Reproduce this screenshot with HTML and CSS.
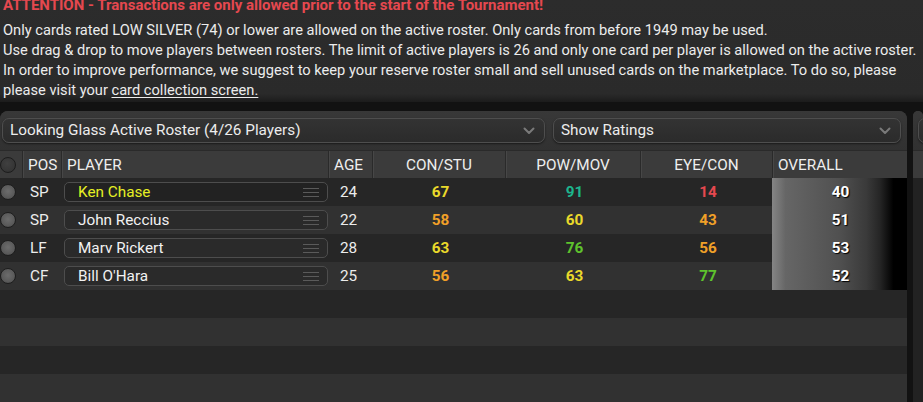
FILE: index.html
```html
<!DOCTYPE html>
<html>
<head>
<meta charset="utf-8">
<link rel="stylesheet" href="styles.css">
</head>
<body>
<div class="notice">
  <div class="attention">ATTENTION - Transactions are only allowed prior to the start of the Tournament!</div>
  <div class="line">Only cards rated LOW SILVER (74) or lower are allowed on the active roster. Only cards from before 1949 may be used.</div>
  <div class="line">Use drag &amp; drop to move players between rosters. The limit of active players is 26 and only one card per player is allowed on the active roster.</div>
  <div class="line">In order to improve performance, we suggest to keep your reserve roster small and sell unused cards on the marketplace. To do so, please</div>
  <div class="line">please visit your <span class="link">card collection screen.</span></div>
</div>
<div class="workspace">
  <section class="panel main">
    <div class="toolbar">
      <div class="select roster">Looking Glass Active Roster (4/26 Players)
        <svg class="chev" width="12" height="8" viewBox="0 0 12 8"><path d="M1.5 1.5 L6 6 L10.5 1.5" fill="none" stroke="#7a7a7a" stroke-width="2" stroke-linecap="round" stroke-linejoin="round"/></svg>
      </div>
      <div class="select ratings">Show Ratings
        <svg class="chev" width="12" height="8" viewBox="0 0 12 8"><path d="M1.5 1.5 L6 6 L10.5 1.5" fill="none" stroke="#7a7a7a" stroke-width="2" stroke-linecap="round" stroke-linejoin="round"/></svg>
      </div>
    </div>
    <div class="grid">
      <div class="hcell"><span class="dot head"></span></div>
      <div class="hcell left">POS</div>
      <div class="hcell left">PLAYER</div>
      <div class="hcell left">AGE</div>
      <div class="hcell">CON/STU</div>
      <div class="hcell">POW/MOV</div>
      <div class="hcell">EYE/CON</div>
      <div class="hcell left">OVERALL</div>

      <div class="row odd">
        <div class="cell"><span class="dot"></span></div>
        <div class="cell pos">SP</div>
        <div class="cell"><div class="name sel">Ken Chase<span class="handle"><i></i><i></i><i></i></span></div></div>
        <div class="cell age">24</div>
        <div class="cell num yellow">67</div>
        <div class="cell num teal">91</div>
        <div class="cell num red">14</div>
        <div class="cell overall">40</div>
      </div>
      <div class="row even">
        <div class="cell"><span class="dot"></span></div>
        <div class="cell pos">SP</div>
        <div class="cell"><div class="name">John Reccius<span class="handle"><i></i><i></i><i></i></span></div></div>
        <div class="cell age">22</div>
        <div class="cell num orange">58</div>
        <div class="cell num yellow">60</div>
        <div class="cell num orange">43</div>
        <div class="cell overall">51</div>
      </div>
      <div class="row odd">
        <div class="cell"><span class="dot"></span></div>
        <div class="cell pos">LF</div>
        <div class="cell"><div class="name">Marv Rickert<span class="handle"><i></i><i></i><i></i></span></div></div>
        <div class="cell age">28</div>
        <div class="cell num yellow">63</div>
        <div class="cell num green">76</div>
        <div class="cell num orange">56</div>
        <div class="cell overall">53</div>
      </div>
      <div class="row even">
        <div class="cell"><span class="dot"></span></div>
        <div class="cell pos">CF</div>
        <div class="cell"><div class="name">Bill O'Hara<span class="handle"><i></i><i></i><i></i></span></div></div>
        <div class="cell age">25</div>
        <div class="cell num orange">56</div>
        <div class="cell num yellow">63</div>
        <div class="cell num green">77</div>
        <div class="cell overall">52</div>
      </div>
      <div class="row blank odd"></div>
      <div class="row blank even"></div>
      <div class="row blank odd"></div>
      <div class="row blank even"></div>
    </div>
  </section>
  <section class="panel side">
    <div class="toolbar"><div class="select stub"></div></div>
    <div class="side-head"></div>
    <div class="side-rows"></div>
  </section>
</div>
</body>
</html>
```
FILE: styles.css
```css
* { box-sizing: border-box; }
html, body { margin: 0; padding: 0; }
body {
  width: 923px;
  height: 402px;
  overflow: hidden;
  background: #121212;
  font-family: Roboto, "Noto Sans", sans-serif;
  font-size: 15.3px;
  color: #ececec;
}
.notice {
  height: 102px;
  padding-left: 3px;
  background: linear-gradient(#2c2c2c, #2a2a2a 92%, #1c1c1c);
  white-space: nowrap;
  overflow: hidden;
  font-size: 14.65px;
}
.attention {
  color: #e5484f;
  font-weight: 700;
  font-size: 15px;
  line-height: 20px;
  margin-top: -5px;
  margin-bottom: 5px;
}
.line { line-height: 20px; }
.link { text-decoration: underline; text-underline-offset: 2px; }

.workspace {
  display: flex;
  gap: 6px;
  padding-top: 9px;
  height: 300px;
}
.panel {
  border-radius: 8px 8px 0 0;
  background: #343434;
  overflow: hidden;
}
.main { width: 907px; flex: none; }
.side { flex: 1; }
.toolbar {
  display: flex;
  gap: 8px;
  padding: 7px 6px 7px 2px;
  height: 39px;
  background: linear-gradient(#383838, #313131);
}
.select {
  height: 25px;
  border: 1px solid #4e4e4e;
  border-radius: 7px;
  background: linear-gradient(#333, #2b2b2b);
  box-shadow: 0 1px 2px rgba(0,0,0,.5);
  display: flex;
  align-items: center;
  justify-content: space-between;
  padding: 0 9px 0 7px;
  line-height: 1;
}
.roster { width: 543px; }
.ratings { flex: 1; }
.stub { width: 30px; margin-left: 3px; }
.chev { margin-top: 1px; flex: none; }

.grid {
  display: grid;
  grid-template-columns: 22px 39px 267px 44px 133px 135px 132px 135px;
}
.hcell {
  height: 28px;
  background: #3b3b3b;
  border-left: 1px solid #2a2a2a;
  border-top: 1px solid #2a2a2a;
  box-shadow: inset 1px 0 #474747;
  display: flex;
  align-items: center;
  justify-content: center;
  color: #eee;
}
.hcell:first-child { border-left: none; box-shadow: none; justify-content: flex-start; }
.hcell.left { justify-content: flex-start; padding-left: 5px; }
.row {
  grid-column: 1 / -1;
  display: grid;
  grid-template-columns: subgrid;
  height: 28px;
}
.odd { background: #262626; }
.even { background: #313131; }
.cell {
  display: flex;
  align-items: center;
  height: 28px;
}
.dot {
  flex: none;
  width: 16px;
  height: 16px;
  border-radius: 50%;
  background: radial-gradient(circle at 50% 45%, #6c6c6c, #5a5a5a 60%, #444 90%);
  border: 1px solid #1e1e1e;
}
.dot.head { background: radial-gradient(circle at 45% 40%, #404040, #303030); border-color: #1d1d1d; }
.pos { padding-left: 8px; }
.name {
  position: relative;
  width: 264px;
  margin-left: 3px;
  height: 20px;
  border: 1px solid #4d4d4d;
  border-radius: 5px;
  background: #2a2a2a;
  display: flex;
  align-items: center;
  padding-left: 13px;
  color: #f2f2f2;
}
.name.sel { color: #e6f024; background: #222; }
.handle {
  margin-left: auto;
  margin-right: 8px;
  width: 16px;
  display: flex;
  flex-direction: column;
  gap: 3px;
}
.handle i {
  display: block;
  height: 1px;
  background: #5a5a5a;
}
.age { padding-left: 12px; }
.num { justify-content: center; font-weight: 700; padding-left: 4px; }
.yellow { color: #e9d92b; }
.orange { color: #f0a028; }
.teal { color: #1db58d; }
.red { color: #e5484f; }
.green { color: #5ec22d; }
.overall {
  justify-content: center;
  font-weight: 700;
  color: #fff;
  text-shadow: 1px 1px 1px #000;
  padding-left: 2px;
  background: linear-gradient(to right, #858585 0%, #666 10%, #505050 50%, #3a3a3a 70%, #252525 80%, #000 90%);
}
.side-head {
  height: 28px;
  background: #3b3b3b;
  border-top: 1px solid #2a2a2a;
}
.side-rows {
  height: 240px;
  background: #222;
}
```
